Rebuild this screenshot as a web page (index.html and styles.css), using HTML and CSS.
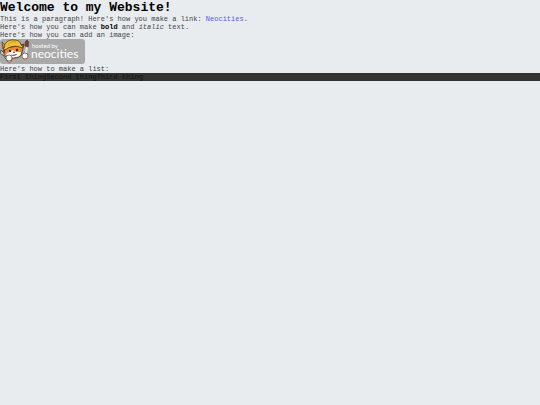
FILE: index.html
```
<!DOCTYPE html>
<html lang="en">
<head>
    <meta charset="UTF-8">
    <meta name="viewport" content="width=device-width, initial-scale=1.0">
    <title>My Website</title>
    <link rel="stylesheet" href="styles.css">
</head>
<body>
    <h1>Welcome to my Website!</h1>

    <p>This is a paragraph! Here's how you make a link: <a href="https://neocities.org">Neocities</a>.</p>

    <p>Here's how you can make <strong>bold</strong> and <em>italic</em> text.</p>

    <p>Here's how you can add an image:</p>
    <svg class="site-button" width="85" height="25" viewBox="0 0 85 25" role="img" aria-label="hosted by neocities">
        <rect class="plate" width="85" height="25" rx="3"/>
        <!-- wrench -->
        <path d="M1 11c-1 3 0 5 2 5l6 8 3-2-6-7c0-2-1-3-3-4l1 3z" fill="#c9ced4" stroke="#444" stroke-width=".8"/>
        <!-- brush -->
        <path d="M27 8L25 18" stroke="#f0e6dc" stroke-width="2"/>
        <path d="M25 7c0-3 0-5 2-6 2 1 2 4 1 7z" fill="#8c3a34" stroke="#444" stroke-width=".7"/>
        <!-- cat -->
        <path d="M5 9l-1 6c1 4 5 5 10 4 5 0 8-2 8-6l2-8-6 2z" fill="#e88a3a" stroke="#3b2a1a" stroke-width=".8"/>
        <path d="M13 11l-7 4c2 4 6 4 9 3 4 0 6-2 6-5l-5 0z" fill="#fff"/>
        <path d="M4 9C4 4 9 0 14 1c4 0 7 2 7 5l2 1-1 2C16 6 10 7 5 11l-2-1z" fill="#f2c23c" stroke="#4b3a14" stroke-width=".8"/>
        <path d="M8 6c2-3 5-4 8-3" fill="none" stroke="#c48b1c" stroke-width=".8"/>
        <path d="M2 3l3 3-2 4z" fill="#e88a3a" stroke="#3b2a1a" stroke-width=".6"/>
        <ellipse cx="10" cy="12" rx="1" ry="1.300" fill="#222"/>
        <ellipse cx="17" cy="11" rx="1" ry="1.300" fill="#222"/>
        <path d="M13 13l2 0-1 1zM11 16c2 1 4 1 6-1" fill="#c4513d" stroke="#633" stroke-width=".5"/>
        <!-- paws -->
        <ellipse cx="9" cy="19" rx="3" ry="3" fill="#fff" stroke="#444" stroke-width=".7"/>
        <path d="M8 23c2 1 4 0 5-2" fill="none" stroke="#e88a3a"/>
        <ellipse cx="25" cy="17" rx="3" ry="3" fill="#fff" stroke="#444" stroke-width=".7"/>
        <path d="M24 21c3 0 4-1 4-3" fill="none" stroke="#e88a3a"/>
        <text class="small-label" x="32" y="9">hosted by</text>
        <text class="big-label" x="31" y="19">neocities</text>
    </svg>

    <p>Here's how to make a list:</p>
    <ul>
        <li>First thing</li>
        <li>Second thing</li>
        <li>Third thing</li>
    </ul>
</body>
</html>
```

FILE: styles.css
```
* {
    margin: 0;
    padding: 0;
}
body {
    background-color: #e8ecef;
    color: #444;
    font-family: "Liberation Mono", "Courier New", monospace;
    font-size: 7px;
    line-height: 8px;
}
h1 {
    color: #000;
    font-size: 13px;
    line-height: 15px;
}
strong {
    color: #000;
}
a {
    color: #5555ee;
    text-decoration: none;
}
a:hover {
    text-decoration: underline;
}
.site-button {
    display: block;
    margin-bottom: 1px;
}
.plate {
    fill: #a9a9a9;
}
.small-label,
.big-label {
    fill: #fff;
    font-family: Lato, "Open Sans", sans-serif;
}
.small-label {
    font-size: 6px;
}
.big-label {
    font-size: 12px;
}
ul {
    display: flex;
    list-style-type: none;
    background-color: #333;
    color: #111;
}
```
